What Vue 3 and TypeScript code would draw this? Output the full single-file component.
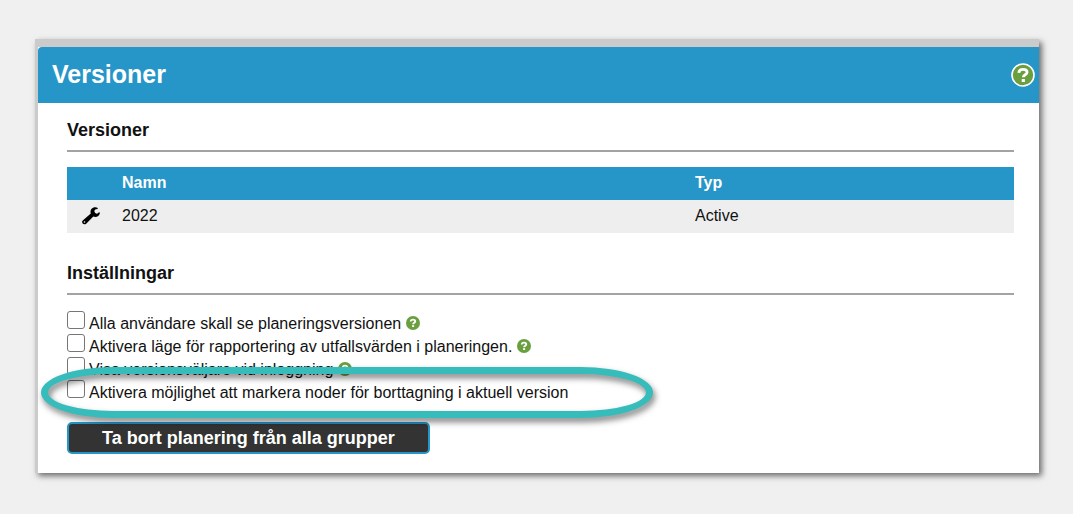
<script setup lang="ts">
import { ref } from 'vue'

interface Version {
  name: string
  type: string
}

interface Setting {
  id: string
  label: string
  help: boolean
  checked: boolean
  highlighted: boolean
}

const versions: Version[] = [{ name: '2022', type: 'Active' }]

const settings = ref<Setting[]>([
  { id: 'show-all', label: 'Alla användare skall se planeringsversionen', help: true, checked: false, highlighted: false },
  { id: 'report-mode', label: 'Aktivera läge för rapportering av utfallsvärden i planeringen.', help: true, checked: false, highlighted: false },
  { id: 'login-picker', label: 'Visa versionsväljare vid inloggning', help: true, checked: false, highlighted: false },
  { id: 'mark-nodes', label: 'Aktivera möjlighet att markera noder för borttagning i aktuell version', help: false, checked: false, highlighted: true },
])
</script>

<template>
  <main class="page">
    <section class="panel">
      <header class="panel-header">
        <h1>Versioner</h1>
        <button class="help-large" type="button" aria-label="Hjälp">
          <svg viewBox="0 0 24 24" aria-hidden="true">
            <circle cx="12" cy="12" r="11" fill="#6a9f3f" stroke="#fff" stroke-width="1.6" />
            <path d="M7.800 9.800C8 7.400 9.600 6.400 12 6.400c2.500 0 4.100 1 4.100 2.900 0 2.500-3.800 2.400-3.800 5" fill="none" stroke="#fff" stroke-width="2.800" />
            <rect x="10.700" y="16" width="3.200" height="3" fill="#fff" />
          </svg>
        </button>
      </header>
      <div class="panel-body">
        <h2>Versioner</h2>
        <table>
          <thead>
            <tr>
              <th class="tool-cell"></th>
              <th class="name-cell" scope="col">Namn</th>
              <th scope="col">Typ</th>
            </tr>
          </thead>
          <tbody>
            <tr v-for="version in versions" :key="version.name">
              <td class="tool-cell">
                <button class="edit" type="button" aria-label="Redigera">
                  <svg viewBox="0 0 18 18" aria-hidden="true">
                    <path d="M15.800.9C12.500-.6 8.500 1.200 8.500 4.900c0 .6.100 1.100.3 1.600L1 13.200c-1.100.9-1.200 2.500-.3 3.400.9 1 2.500 1 3.500.1l7.100-7.100c2.500 1.200 6.200-.1 6.700-3.800l-1-.5-1.500 1.300c-1.400.3-2.900-.7-3.100-2.100-.1-1.100.6-2 1.600-2.200l1.600-.4z" />
                    <circle cx="2.500" cy="15" r="0.800" fill="#eee" />
                  </svg>
                </button>
              </td>
              <td>{{ version.name }}</td>
              <td>{{ version.type }}</td>
            </tr>
          </tbody>
        </table>
        <h2>Inställningar</h2>
        <ul>
          <li v-for="setting in settings" :key="setting.id">
            <input :id="setting.id" v-model="setting.checked" type="checkbox" />
            <label :for="setting.id">{{ setting.label }}</label>
            <button v-if="setting.help" class="help-small" type="button" aria-label="Hjälp">
              <svg viewBox="0 0 14 14" aria-hidden="true">
                <circle cx="7" cy="7" r="7" fill="#6a9f3f" />
                <path d="M4.700 5.500C4.800 4.200 5.700 3.600 7 3.600c1.400 0 2.300.6 2.300 1.700 0 1.500-2.200 1.500-2.200 3" fill="none" stroke="#fff" stroke-width="1.800" />
                <rect x="6.100" y="9.200" width="2" height="1.800" fill="#fff" />
              </svg>
            </button>
            <span v-if="setting.highlighted" class="marker" aria-hidden="true"></span>
          </li>
        </ul>
        <button class="remove" type="button">Ta bort planering från alla grupper</button>
      </div>
    </section>
  </main>
</template>

<style>
body {
  margin: 0;
  background: #f0f0f0;
}
</style>

<style scoped>
.page {
  padding: 39px 34px 41px 35px;
  font-family: "Liberation Sans", Arial, sans-serif;
  font-size: 16px;
  color: #111;
}

.panel {
  background: #fff;
  border-top: 8px solid #cbcbcb;
  border-left: 3px solid #cbcbcb;
  box-shadow: 3px 3px 6px rgba(0, 0, 0, 0.55);
}

.panel-header {
  display: flex;
  align-items: center;
  justify-content: space-between;
  height: 56px;
  padding: 0 4px 0 14px;
  background: #2695c7;
  border-top-left-radius: 4px;
  color: #fff;
}

h1 {
  margin: 0;
  font-size: 25px;
  line-height: 54px;
  align-self: flex-start;
}

button {
  font-family: inherit;
  cursor: pointer;
}

.help-large,
.help-small,
.edit {
  display: block;
  padding: 0;
  border: 0;
  background: none;
}

svg {
  display: block;
  width: 100%;
  height: 100%;
}

.help-large {
  width: 24px;
  height: 24px;
}

.panel-body {
  padding: 15px 25px 19px 29px;
}

h2 {
  margin: 0 0 15px;
  padding-bottom: 8px;
  border-bottom: 2px solid #a3a3a3;
  font-size: 18px;
  line-height: 24px;
}

table {
  width: 100%;
  margin-bottom: 28px;
  border-collapse: collapse;
  table-layout: fixed;
}

th,
td {
  height: 31px;
  padding: 0 0 2px;
  text-align: left;
}

th {
  background: #2695c7;
  color: #fff;
}

td {
  background: #eee;
}

.tool-cell {
  width: 55px;
}

.name-cell {
  width: 573px;
}

.edit {
  width: 18px;
  height: 18px;
  margin-left: 15px;
}

ul {
  margin: 0 0 19px;
  padding: 1px 0 0;
  list-style: none;
}

li {
  position: relative;
  display: flex;
  align-items: center;
  height: 23px;
  white-space: nowrap;
}

label {
  padding-top: 2px;
}

input {
  appearance: none;
  box-sizing: border-box;
  width: 18px;
  height: 18px;
  margin: 0 4px 5px 0;
  border: 1px solid #767676;
  border-radius: 3px;
  background: #fff;
}

input:checked {
  background: #2695c7;
}

.help-small {
  width: 14px;
  height: 14px;
  margin-left: 5px;
}

.marker {
  position: absolute;
  box-sizing: border-box;
  top: -13px;
  left: -26px;
  width: 612px;
  height: 51px;
  border: 7px solid #36bcba;
  border-radius: 72px / 50%;
  filter: drop-shadow(2px 4px 3px rgba(0, 0, 0, 0.5));
  pointer-events: none;
}

.remove {
  display: block;
  height: 32px;
  padding: 0 33px;
  border: 2px solid #2695c7;
  border-radius: 5px;
  background: #333;
  color: #fff;
  font-size: 18px;
  font-weight: bold;
}
</style>
